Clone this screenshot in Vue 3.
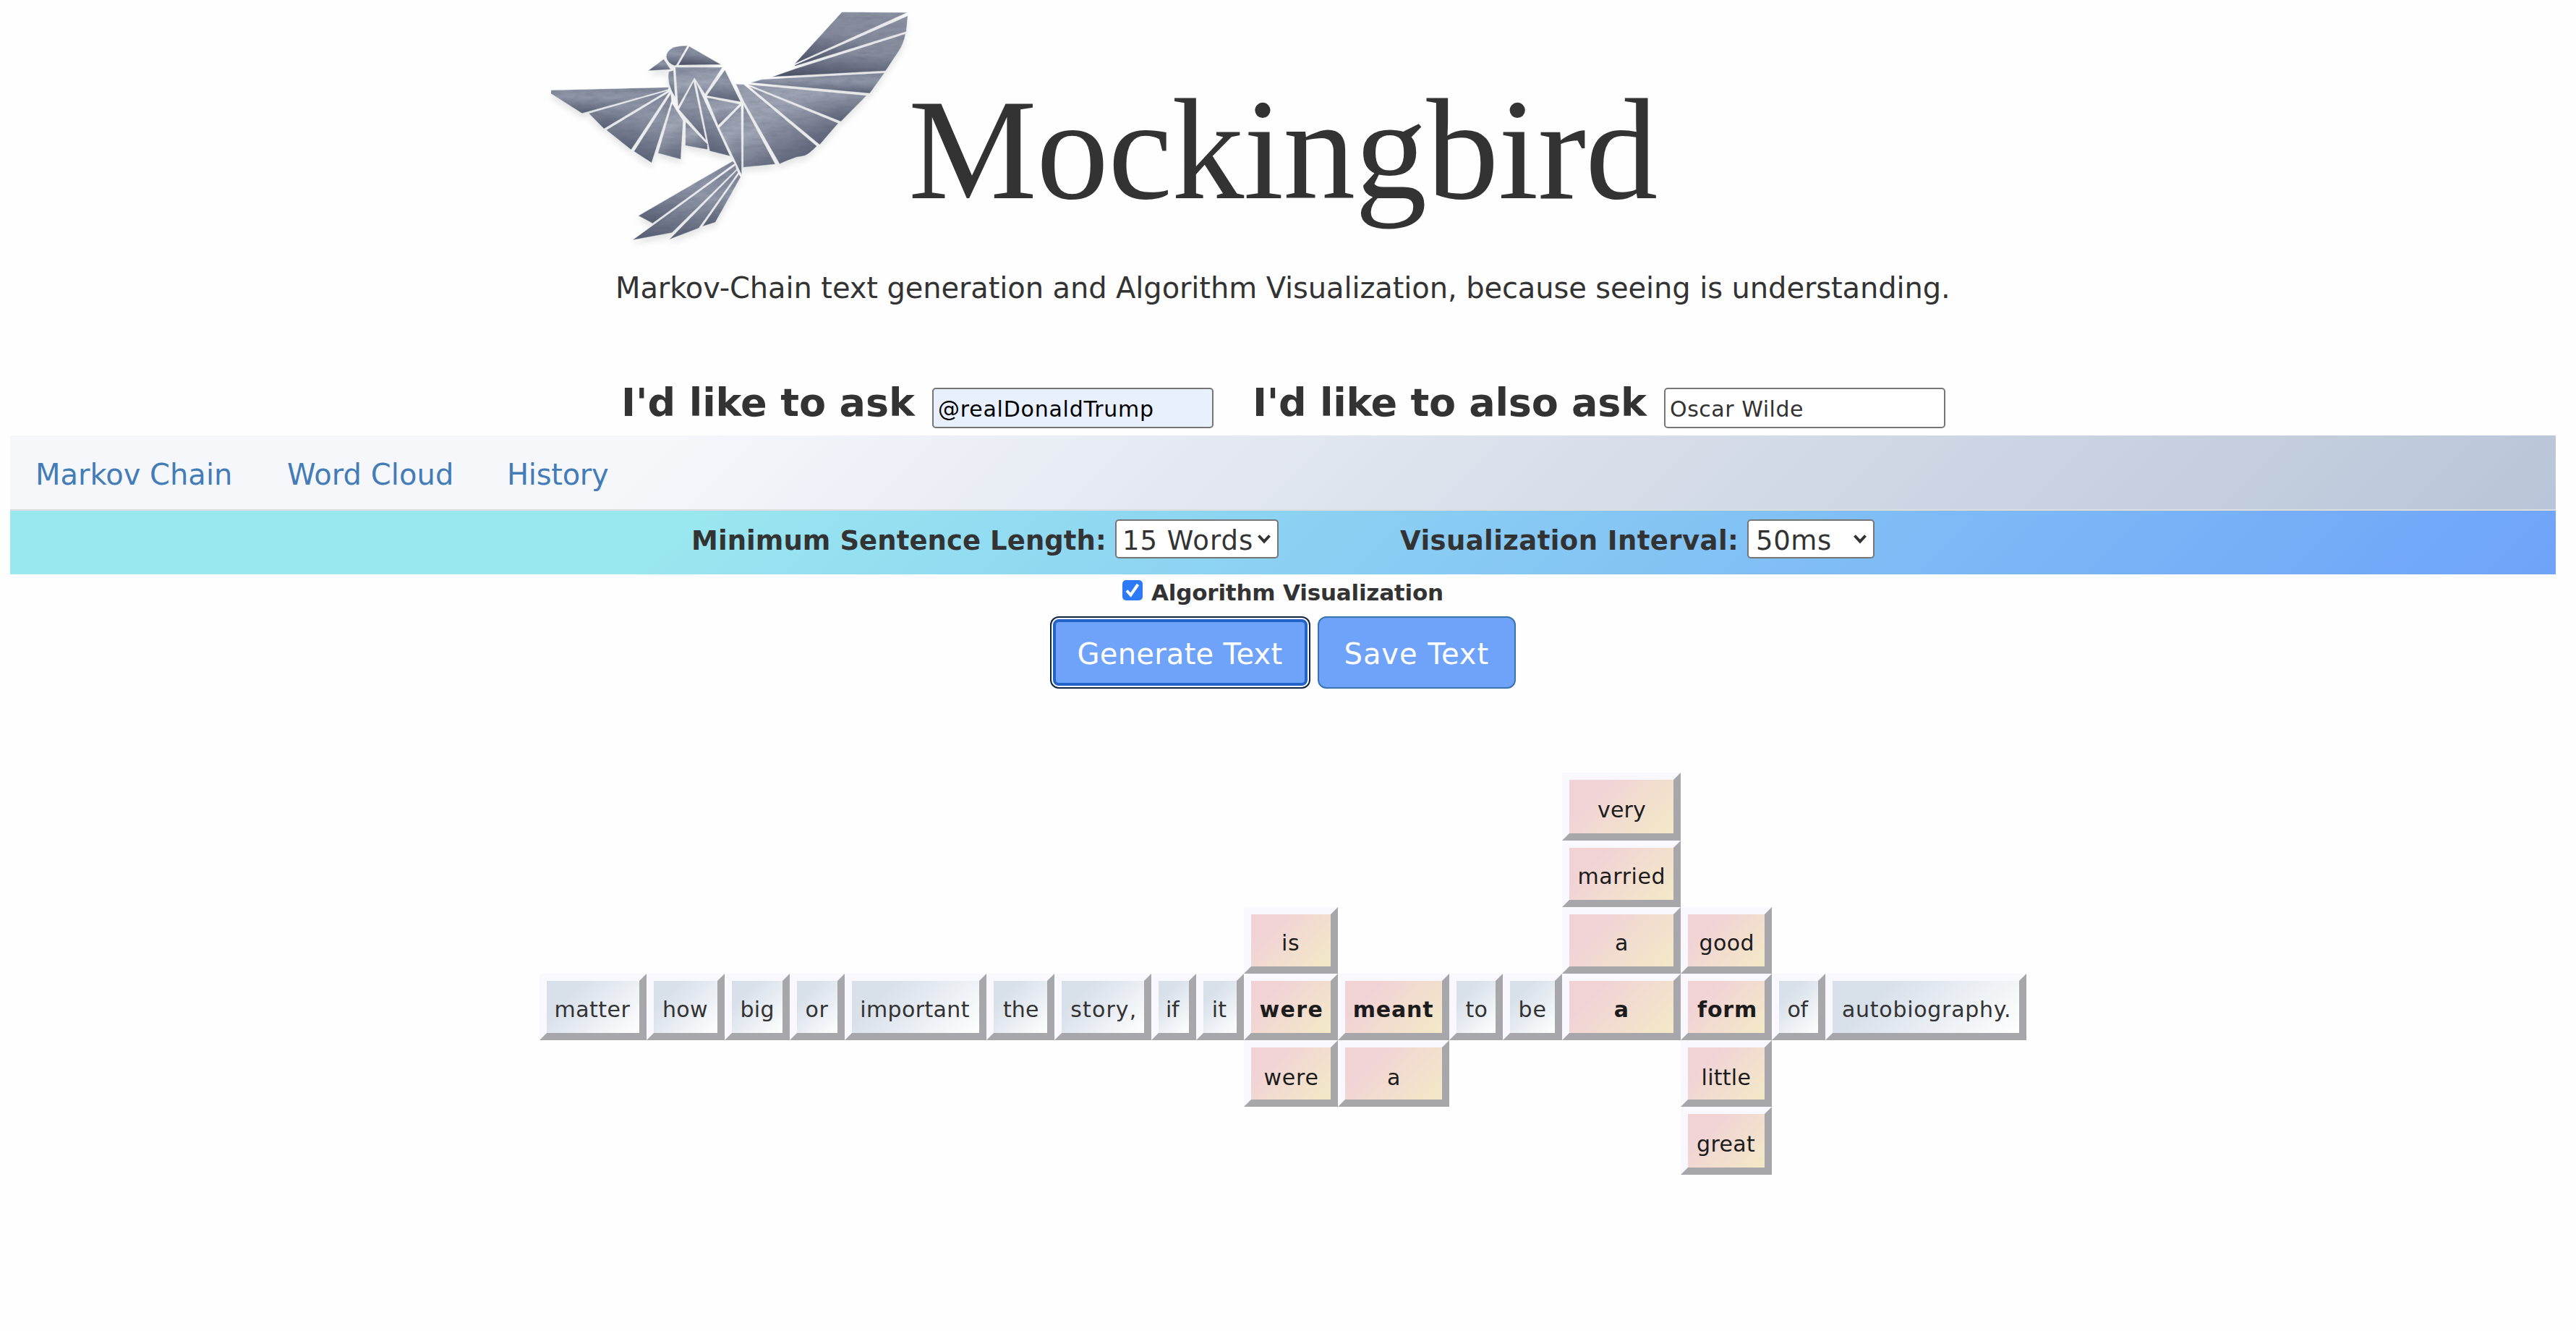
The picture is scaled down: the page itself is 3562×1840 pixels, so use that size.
<script setup>
import { ref } from 'vue'

const SANS = '"DejaVu Sans", Verdana, sans-serif'
const ctx = document.createElement('canvas').getContext('2d')

// Tracks a label so that its visible ink spans exactly `width` pixels.
function fit(text, size, weight, width) {
  ctx.font = `${weight} ${size}px ${SANS}`
  const m = ctx.measureText(text)
  const ink = m.actualBoundingBoxLeft + m.actualBoundingBoxRight
  const spacing = text.length > 1 ? (width - ink) / (text.length - 1) : 0
  return {
    fontSize: `${size}px`,
    fontWeight: weight,
    width: `${width}px`,
    letterSpacing: `${spacing.toFixed(3)}px`,
    textIndent: `${m.actualBoundingBoxLeft.toFixed(2)}px`
  }
}

const first = ref('@realDonaldTrump')
const second = ref('Oscar Wilde')
const visualize = ref(true)

const tabs = [
  { name: 'Markov Chain', width: 266 },
  { name: 'Word Cloud', width: 226 },
  { name: 'History', width: 137 }
]

const columns = [148, 108, 90, 76, 196, 94, 134, 62, 66, 130, 154, 74, 82, 164, 126, 74, 278]

// t: word, c: column, r: row (4 is the sentence itself), w: ink width
const words = [
  { t: 'matter', c: 1, r: 4, w: 103 },
  { t: 'how', c: 2, r: 4, w: 60 },
  { t: 'big', c: 3, r: 4, w: 43 },
  { t: 'or', c: 4, r: 4, w: 31 },
  { t: 'important', c: 5, r: 4, w: 149.5 },
  { t: 'the', c: 6, r: 4, w: 48 },
  { t: 'story,', c: 7, r: 4, w: 87.5 },
  { t: 'if', c: 8, r: 4, w: 18 },
  { t: 'it', c: 9, r: 4, w: 18.5 },
  { t: 'is', c: 10, r: 3, w: 22, warm: true },
  { t: 'were', c: 10, r: 4, w: 85, warm: true, bold: true },
  { t: 'were', c: 10, r: 5, w: 73, warm: true, low: true },
  { t: 'meant', c: 11, r: 4, w: 108.5, warm: true, bold: true },
  { t: 'a', c: 11, r: 5, w: 16, warm: true, low: true },
  { t: 'to', c: 12, r: 4, w: 29 },
  { t: 'be', c: 13, r: 4, w: 35 },
  { t: 'very', c: 14, r: 1, w: 66, warm: true, low: true },
  { t: 'married', c: 14, r: 2, w: 117, warm: true },
  { t: 'a', c: 14, r: 3, w: 16, warm: true },
  { t: 'a', c: 14, r: 4, w: 18.4, warm: true, bold: true },
  { t: 'good', c: 15, r: 3, w: 73, warm: true },
  { t: 'form', c: 15, r: 4, w: 80, warm: true, bold: true },
  { t: 'little', c: 15, r: 5, w: 65, warm: true, low: true },
  { t: 'great', c: 15, r: 6, w: 80, warm: true, low: true },
  { t: 'of', c: 16, r: 4, w: 29 },
  { t: 'autobiography.', c: 17, r: 4, w: 230 }
]

const feathers = [
  { f: 'deep', d: 'M1188 50L1441 52L1005 265Z' },
  { f: 'deep', d: 'M1443 66L1437 131L1007 274L1005 270Z' },
  { f: 'deep', d: 'M1434 140Q1428 180 1408 212L1357 294L918 319L1010 284Z' },
  { f: 'mid', d: 'M1353 302L1296 387L835 343L880 329Z' },
  { f: 'fan', d: 'M1284 396L1184 504L824 350Z' },
  { f: 'fan', d: 'M1174 511L1102 600L828 358Z' },
  { f: 'fan', d: 'M778 349L808 350L1091 606Q1062 638 1044 646L1012 652Q970 668 947 680L808 420Z' },
  { f: 'light', d: 'M807 434L930 681L806 694Z' },
  { f: 'light', d: 'M798 437L800 725L713 530Z' },
  { f: 'light', d: 'M792 432L709 520L665 404Z' },
  { f: 'mid', d: 'M735 290L796 422L664 397Z' },
  { f: 'light', d: 'M543 279L725 279L658 390L617 323L554 442Z' },
  { f: 'deep', d: 'M597 192L720 268L555 270Z' },
  { f: 'mid', d: 'M590 190Q512 188 508 235Q511 262 541 273L548 268Z' },
  { f: 'mid', d: 'M498 245L525 288L438 293Z' },
  { f: 'mid', d: 'M536 292L542 402Q508 345 518 297Z' },
  { f: 'mid', d: 'M614 338L662 582L557 454Z' },
  { f: 'mid', d: 'M622 338L755 647L676 626Z' },
  { f: 'light', d: 'M583 505L667 598L668 620L582 604Z' },
  { f: 'mid', d: 'M60 374L518 362L515 371L182 470L60 387Z' },
  { f: 'mid', d: 'M208 470L516 375L267 534Z' },
  { f: 'mid', d: 'M276 539L521 380L372 621Z' },
  { f: 'mid', d: 'M383 628L526 388L528 420L451 675Z' },
  { f: 'light', d: 'M476 635L531 430L573 500L564 661Z' },
  { f: 'mid', d: 'M765 668L773 678L455 926L400 895Z' },
  { f: 'mid', d: 'M776 685L780 702L530 965L378 995Z' },
  { f: 'mid', d: 'M782 706L786 716L634 946L520 993Z' },
  { f: 'mid', d: 'M789 722L796 734L698 922L648 939Z' }
]
</script>

<template>
  <div class="page">
    <header class="brand">
      <svg class="bird" viewBox="62 0 1386 1050" preserveAspectRatio="none">
        <defs>
          <linearGradient id="deep" x1="0.6" y1="0" x2="0.4" y2="1">
            <stop offset="0" stop-color="#898f9f" />
            <stop offset="0.45" stop-color="#858b9c" />
            <stop offset="1" stop-color="#4f5569" />
          </linearGradient>
          <linearGradient id="mid" x1="0.55" y1="0" x2="0.45" y2="1">
            <stop offset="0" stop-color="#81889a" />
            <stop offset="0.4" stop-color="#8f96a7" />
            <stop offset="1" stop-color="#5a6175" />
          </linearGradient>
          <linearGradient id="fan" x1="0.2" y1="0" x2="0.7" y2="1">
            <stop offset="0" stop-color="#979dad" />
            <stop offset="0.35" stop-color="#9ea4b3" />
            <stop offset="1" stop-color="#5e6478" />
          </linearGradient>
          <linearGradient id="light" x1="0.4" y1="0" x2="0.6" y2="1">
            <stop offset="0" stop-color="#888fa0" />
            <stop offset="0.4" stop-color="#a0a6b5" />
            <stop offset="1" stop-color="#676d81" />
          </linearGradient>
          <filter id="grain" x="0" y="0" width="1" height="1" color-interpolation-filters="sRGB">
            <feTurbulence type="fractalNoise" baseFrequency="0.02 0.06" numOctaves="4" seed="4" />
            <feColorMatrix values="0 0 0 0 0.3  0 0 0 0 0.33  0 0 0 0 0.42  0.4 0 0 0 -0.16" result="n" />
            <feComposite in="n" in2="SourceAlpha" operator="in" result="t" />
            <feMerge><feMergeNode in="SourceGraphic" /><feMergeNode in="t" /></feMerge>
          </filter>
        </defs>
        <g filter="url(#grain)" stroke="#eceef2" stroke-width="1.2">
          <path v-for="(p, i) in feathers" :key="i" :d="p.d" :fill="`url(#${p.f})`" />
        </g>
      </svg>
      <h1 class="title">Mockingbird</h1>
    </header>

    <p class="tagline">
      <span class="fit" :style="fit('Markov-Chain text generation and Algorithm Visualization, because seeing is understanding.', 40, 400, 1839)">Markov-Chain text generation and Algorithm Visualization, because seeing is understanding.</span>
    </p>

    <div class="ask">
      <label class="fit" :style="fit(`I'd like to ask`, 54, 700, 403)">I'd like to ask</label>
      <input v-model="first" class="field filled" :style="{ letterSpacing: fit('@realDonaldTrump', 30, 400, 296).letterSpacing }" />
      <label class="fit second" :style="fit(`I'd like to also ask`, 54, 700, 542)">I'd like to also ask</label>
      <input v-model="second" class="field" :style="{ letterSpacing: fit('Oscar Wilde', 30, 400, 182).letterSpacing }" />
    </div>

    <nav class="tabs">
      <a v-for="tab in tabs" :key="tab.name" class="fit" :style="fit(tab.name, 40, 400, tab.width)">{{ tab.name }}</a>
    </nav>

    <div class="options">
      <label class="fit" :style="fit('Minimum Sentence Length:', 37, 700, 567)">Minimum Sentence Length:</label>
      <div class="select length">
        <span class="fit" :style="fit('15 Words', 37, 400, 175)">15 Words</span>
        <svg class="chevron" viewBox="0 0 20 14"><path d="M2.5 2.5L10 10.5L17.5 2.5" /></svg>
      </div>
      <label class="fit interval-label" :style="fit('Visualization Interval:', 37, 700, 464)">Visualization Interval:</label>
      <div class="select interval">
        <span class="fit" :style="fit('50ms', 37, 400, 101)">50ms</span>
        <svg class="chevron" viewBox="0 0 20 14"><path d="M2.5 2.5L10 10.5L17.5 2.5" /></svg>
      </div>
    </div>

    <div class="toggle" @click="visualize = !visualize">
      <span class="check">
        <svg v-if="visualize" viewBox="0 0 28 28"><path d="M6 14.5L11.5 20.5L21.5 6" /></svg>
      </span>
      <label class="fit" :style="fit('Algorithm Visualization', 31, 700, 402)">Algorithm Visualization</label>
    </div>

    <div class="actions">
      <button class="btn focused"><span class="fit" :style="fit('Generate Text', 40, 400, 281)">Generate Text</span></button>
      <button class="btn save"><span class="fit" :style="fit('Save Text', 40, 400, 197)">Save Text</span></button>
    </div>

    <main class="chain" :style="{ gridTemplateColumns: columns.map((c) => c + 'px').join(' ') }">
      <div
        v-for="word in words"
        :key="word.c + '-' + word.r"
        class="word"
        :class="{ warm: word.warm, low: word.low }"
        :style="{ gridColumn: word.c, gridRow: word.r }"
      >
        <span class="fit" :style="fit(word.t, 30, word.bold ? 700 : 400, word.w)">{{ word.t }}</span>
      </div>
    </main>
  </div>
</template>

<style>
body {
  margin: 0;
  background: #fefefe;
}
</style>

<style scoped>
.page {
  box-sizing: border-box;
  width: 3562px;
  height: 1840px;
  padding: 0 28px 0 14px;
  overflow: hidden;
  background: #fefefe;
  color: #333;
  font-family: "DejaVu Sans", Verdana, sans-serif;
}
.fit {
  display: block;
  flex: none;
  white-space: nowrap;
}
.brand {
  display: flex;
  align-items: flex-start;
  height: 370px;
  padding-left: 748px;
}
.bird {
  flex: none;
  width: 495px;
  height: 350px;
  filter: drop-shadow(0 6px 4px rgba(0, 0, 0, 0.1));
}
.title {
  margin: 106px 0 0 -1px;
  font: 400 200px/201px "Liberation Serif", "Times New Roman", serif;
  letter-spacing: -0.8px;
}
.tagline {
  display: flex;
  margin: 0;
  height: 166px;
  padding-left: 840px;
  line-height: 56px;
}
.ask {
  display: flex;
  height: 66px;
  padding-left: 849px;
  line-height: 56px;
}
.ask label {
  margin-top: -7px;
}
.ask .second {
  margin-left: 58px;
}
.field {
  box-sizing: border-box;
  width: 389px;
  height: 56px;
  margin: 0 0 0 23px;
  padding: 3px 6px 0;
  border: 2px solid #767676;
  border-radius: 5px;
  outline: none;
  background: #fff;
  color: #333;
  font: 400 30px "DejaVu Sans", Verdana, sans-serif;
}
.field.filled {
  background: #e8f0fe;
  color: #000;
}
.tabs {
  box-sizing: border-box;
  display: flex;
  gap: 80px;
  height: 104px;
  padding-left: 38px;
  border-bottom: 2px solid #ddd;
  background: linear-gradient(135deg, #f5f7fb 25%, #b9c5d8 100%);
  color: #437cb7;
  line-height: 108px;
}
.options {
  display: flex;
  box-sizing: border-box;
  height: 88px;
  padding: 12px 0 0 945px;
  background: linear-gradient(135deg, #9ae8ef 25%, #6fa3f9 100%);
  line-height: 60px;
}
.interval-label {
  margin-left: 168px;
}
.select {
  box-sizing: border-box;
  display: flex;
  justify-content: space-between;
  height: 54px;
  margin-left: 16px;
  padding: 0 8px 0 12px;
  border: 2px solid #767676;
  border-radius: 5px;
  background: #fff;
  line-height: 56px;
}
.select.length {
  width: 226px;
}
.select.interval {
  width: 176px;
}
.chevron {
  flex: none;
  align-self: center;
  width: 20px;
  height: 14px;
}
.chevron path {
  fill: none;
  stroke: #333;
  stroke-width: 4;
}
.toggle {
  display: flex;
  height: 58px;
  padding-left: 1538px;
  line-height: 50px;
}
.check {
  flex: none;
  width: 28px;
  height: 28px;
  margin: 8px 12px 0 0;
  border-radius: 5px;
  background: #2d7af9;
}
.check svg {
  display: block;
}
.check path {
  fill: none;
  stroke: #fff;
  stroke-width: 4;
}
.actions {
  display: flex;
  gap: 10px;
  height: 216px;
  padding-left: 1438px;
}
.btn {
  box-sizing: border-box;
  display: flex;
  justify-content: center;
  width: 274px;
  height: 100px;
  margin: 0;
  padding: 0;
  border: 2px solid #3b73af;
  border-radius: 12px;
  background: #6fa3f9;
  color: #fff;
  font-family: inherit;
  line-height: 100px;
}
.btn.focused {
  width: 352px;
  height: 92px;
  margin: 4px;
  border: 4px solid #2463c9;
  border-radius: 8px;
  box-shadow: 0 0 0 2px #fff, 0 0 0 4px #10253f;
  line-height: 88px;
}
.chain {
  display: grid;
  grid-template-rows: 94px 92px 92px 92px 92px 94px;
  margin-left: 732px;
}
.word {
  display: flex;
  justify-content: center;
  border: 10px solid;
  border-color: #f9f8ff #a7a6ab #a7a6ab #f9f8ff;
  background: linear-gradient(135deg, #d8e0ea 25%, #fefefe 100%) padding-box;
  line-height: 79px;
}
.word.warm {
  background: linear-gradient(135deg, #f1d3d6 25%, #f3e9c6 100%) padding-box;
  color: #1c1c1c;
}
.word.low {
  line-height: 83px;
}
</style>
